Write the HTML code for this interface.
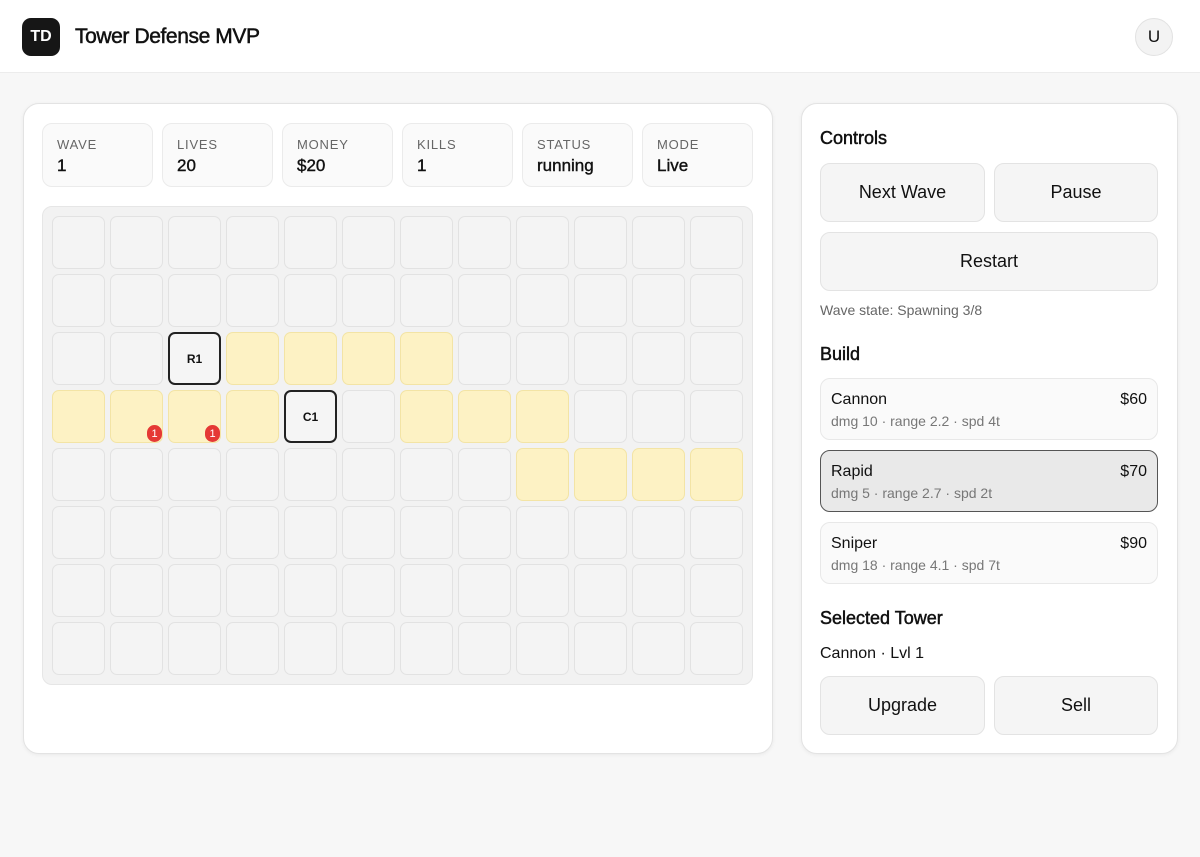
<!DOCTYPE html>
<html><head><style>
*{box-sizing:border-box;margin:0;padding:0}
body{width:1200px;height:857px;background:#f7f7f7;font-family:"Liberation Sans",sans-serif;color:#111;position:relative;overflow:hidden}
.hdr{position:absolute;left:0;top:0;width:1200px;height:73px;background:#fff;border-bottom:1px solid #ececec}
.logo{position:absolute;left:22px;top:18px;width:38px;height:38px;border-radius:9px;background:#161616;color:#fff;font-weight:bold;font-size:16px;display:flex;align-items:center;justify-content:center}
.title{position:absolute;left:75px;top:25px;font-size:21px;letter-spacing:-0.4px;-webkit-text-stroke:0.5px #111}
.av{position:absolute;left:1135px;top:18px;width:38px;height:38px;border-radius:50%;background:#f3f3f3;border:1px solid #e2e2e2;display:flex;align-items:center;justify-content:center;font-size:17px}
.card{position:absolute;background:#fff;border:1px solid #e3e3e3;border-radius:16px;box-shadow:0 1px 4px rgba(0,0,0,.06)}
.stat{position:absolute;top:123px;width:111px;height:64px;border:1px solid #ebebeb;border-radius:10px;background:#fafafa;padding:13px 14px}
.stat .l{font-size:13px;color:#666;letter-spacing:.8px}
.stat .v{font-size:17px;margin-top:4px;-webkit-text-stroke:0.4px #111}
.grid{position:absolute;left:42px;top:206px;width:711px;height:479px;background:#f2f2f2;border:1px solid #e6e6e6;border-radius:10px}
.c{position:absolute;width:53px;height:53px;border-radius:7px;background:#f4f4f4;border:1px solid #e2e2e2;font-size:12px;font-weight:bold;display:flex;align-items:center;justify-content:center}
.y{background:#fdf2c4;border-color:#f3e4a5}
.t{border:2px solid #222;background:#f5f5f5}
.b{position:absolute;right:0;bottom:0;width:15px;height:17px;border-radius:8px;background:#e53935;color:#fff;font-size:11px;font-weight:normal;display:flex;align-items:center;justify-content:center}
.btn{position:absolute;background:#f5f5f5;border:1px solid #e3e3e3;border-radius:10px;display:flex;align-items:center;justify-content:center;font-size:18px}
.h{position:absolute;left:820px;font-size:18px;-webkit-text-stroke:0.5px #111}
.tw{position:absolute;left:820px;width:338px;height:62px;border:1px solid #e8e8e8;border-radius:10px;background:#fafafa;padding:12px 10px}
.tw .n{font-size:16px}.tw .p{position:absolute;right:10px;top:12px;font-size:16px}
.tw .s{font-size:14px;color:#777;margin-top:4px}
</style></head><body>
<div class="hdr"><div class="logo">TD</div><div class="title">Tower Defense MVP</div><div class="av">U</div></div>
<div class="card" style="left:23px;top:103px;width:750px;height:651px"></div>
<div class="stat" style="left:42px"><div class="l">WAVE</div><div class="v">1</div></div>
<div class="stat" style="left:162px"><div class="l">LIVES</div><div class="v">20</div></div>
<div class="stat" style="left:282px"><div class="l">MONEY</div><div class="v">$20</div></div>
<div class="stat" style="left:402px"><div class="l">KILLS</div><div class="v">1</div></div>
<div class="stat" style="left:522px"><div class="l">STATUS</div><div class="v">running</div></div>
<div class="stat" style="left:642px"><div class="l">MODE</div><div class="v">Live</div></div>
<div class="grid"></div>
<div id="cells"></div>
<script>
var Y={"2,3":1,"2,4":1,"2,5":1,"2,6":1,"3,0":1,"3,1":1,"3,2":1,"3,3":1,"3,6":1,"3,7":1,"3,8":1,"4,8":1,"4,9":1,"4,10":1,"4,11":1};
var h="";
for(var r=0;r<8;r++)for(var c=0;c<12;c++){
var k=r+","+c,cls="c",txt="";
if(Y[k])cls+=" y";
if(k=="2,2"){cls+=" t";txt="R1"}
if(k=="3,4"){cls+=" t";txt="C1"}
if(k=="3,1"||k=="3,2")txt='<span class="b">1</span>';
h+='<div class="'+cls+'" style="left:'+(52+c*58)+'px;top:'+(216+r*58)+'px">'+txt+'</div>';}
document.getElementById("cells").innerHTML=h;
</script>
<div class="card" style="left:801px;top:103px;width:377px;height:651px"></div>
<div class="h" style="top:128px">Controls</div>
<div class="btn" style="left:820px;top:163px;width:165px;height:59px">Next Wave</div>
<div class="btn" style="left:994px;top:163px;width:164px;height:59px">Pause</div>
<div class="btn" style="left:820px;top:232px;width:338px;height:59px">Restart</div>
<div style="position:absolute;left:820px;top:302px;font-size:14px;color:#666">Wave state: Spawning 3/8</div>
<div class="h" style="top:344px">Build</div>
<div class="tw" style="top:378px"><div class="n">Cannon</div><div class="p">$60</div><div class="s">dmg 10 · range 2.2 · spd 4t</div></div>
<div class="tw" style="top:450px;background:#e9e9e9;border-color:#555"><div class="n">Rapid</div><div class="p">$70</div><div class="s">dmg 5 · range 2.7 · spd 2t</div></div>
<div class="tw" style="top:522px"><div class="n">Sniper</div><div class="p">$90</div><div class="s">dmg 18 · range 4.1 · spd 7t</div></div>
<div class="h" style="top:608px">Selected Tower</div>
<div style="position:absolute;left:820px;top:645px;font-size:16px">Cannon · Lvl 1</div>
<div class="btn" style="left:820px;top:676px;width:165px;height:59px">Upgrade</div>
<div class="btn" style="left:994px;top:676px;width:164px;height:59px">Sell</div>
</body></html>
